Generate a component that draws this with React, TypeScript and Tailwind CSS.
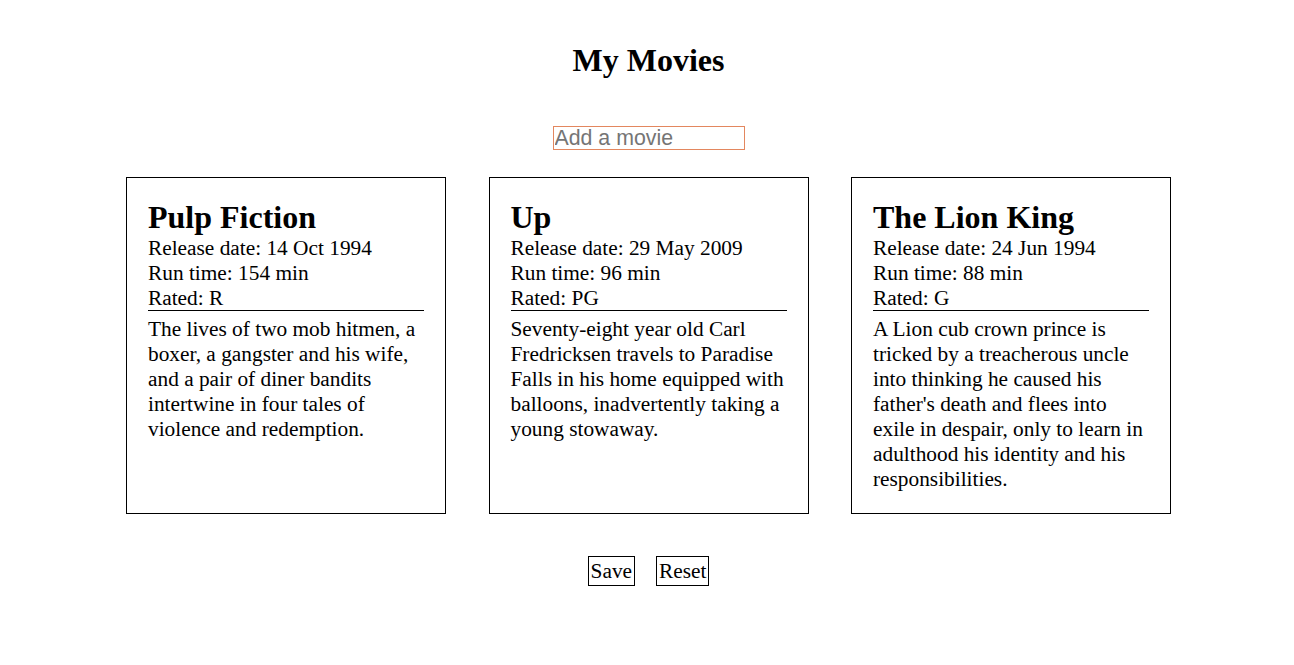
import React from "react";

type Movie = {
  title: string;
  released: string;
  runtime: string;
  rated: string;
  plot: string;
};

const movies: Movie[] = [
  {
    title: "Pulp Fiction",
    released: "14 Oct 1994",
    runtime: "154 min",
    rated: "R",
    plot: "The lives of two mob hitmen, a boxer, a gangster and his wife, and a pair of diner bandits intertwine in four tales of violence and redemption.",
  },
  {
    title: "Up",
    released: "29 May 2009",
    runtime: "96 min",
    rated: "PG",
    plot: "Seventy-eight year old Carl Fredricksen travels to Paradise Falls in his home equipped with balloons, inadvertently taking a young stowaway.",
  },
  {
    title: "The Lion King",
    released: "24 Jun 1994",
    runtime: "88 min",
    rated: "G",
    plot: "A Lion cub crown prince is tricked by a treacherous uncle into thinking he caused his father's death and flees into exile in despair, only to learn in adulthood his identity and his responsibilities.",
  },
];

function MovieCard({ movie }: { movie: Movie }) {
  return (
    <div className="w-[320px] border border-black px-[21px] pt-[21px] pb-[21px]">
      <h2 className="text-[32px] font-bold leading-[36px]">{movie.title}</h2>
      <div className="mt-[1px] text-[21.33px] leading-[25px]">
        <div>Release date: {movie.released}</div>
        <div>Run time: {movie.runtime}</div>
        <div className="leading-[24px] border-b border-black">Rated: {movie.rated}</div>
      </div>
      <p className="mt-[6px] text-[21.33px] leading-[25px]">{movie.plot}</p>
    </div>
  );
}

export default function App() {
  return (
    <div className="min-h-screen bg-white text-black font-['Liberation_Serif',serif] flex flex-col items-center pt-[40px] pl-[3px]">
      <h1 className="text-[32px] font-bold leading-[40px]">My Movies</h1>
      <input
        className="mt-[46px] w-[192px] h-[24px] p-0 pl-[1px] border border-[#e3875f] outline-none font-['Liberation_Sans',sans-serif] text-[21.33px] leading-[22px] placeholder:text-[#757575]"
        placeholder="Add a movie"
      />
      <div className="mt-[27px] flex gap-[42.5px]">
        {movies.map((m) => (
          <MovieCard key={m.title} movie={m} />
        ))}
      </div>
      <div className="mt-[42px] flex gap-[21px]">
        <button className="border border-black px-[2px] py-[1px] text-[21.33px] leading-[26px]">Save</button>
        <button className="border border-black px-[2px] py-[1px] text-[21.33px] leading-[26px]">Reset</button>
      </div>
    </div>
  );
}
